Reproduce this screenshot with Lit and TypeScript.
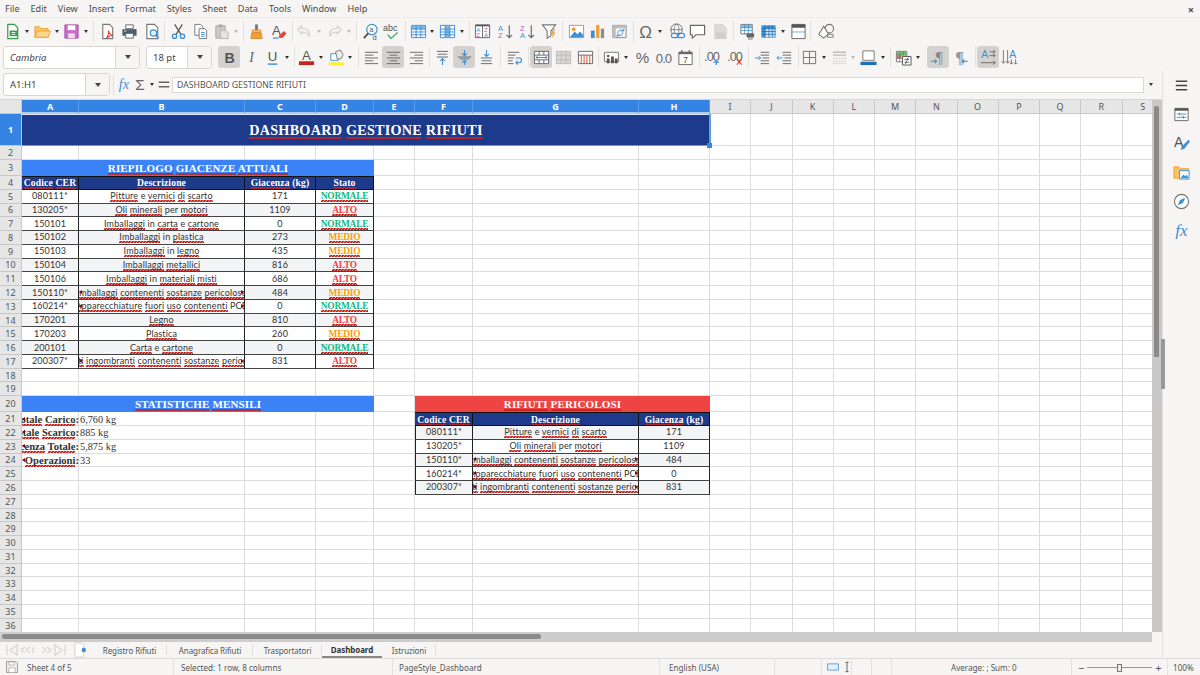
import { LitElement, html, css, svg, nothing } from "lit";
import { customElement } from "lit/decorators.js";

const B = "#3f8fd2";
const O = "#f0a030";

// toolbar icons, all on a 18x18 box
const icons: Record<string, any> = {
  newdoc: svg`<path d="M4 1.500h7l3.500 3.500v11.500h-10.500z" fill="#fff" stroke="#3a9a4a" stroke-width="1.300"/><path d="M6 8h8v6h-8z" fill="#3a9a4a"/><path d="M8 10h4M8 12h4" stroke="#fff"/>`,
  open: svg`<path d="M1 15v-11h5l2 2h7v9z" fill="#f8c468" stroke="${O}"/><path d="M1 15l2.500-6.500h14l-2.500 6.500z" fill="#fbd68e" stroke="${O}"/>`,
  save: svg`<path d="M2 2h14v14h-14z" fill="#c86fc8" stroke="#a94fa9"/><path d="M5 2.500h8v5h-8z" fill="#fff"/><path d="M5.500 11h7v5h-7z" fill="#eedcee"/>`,
  pdf: svg`<path d="M4 1.500h7l3.500 3.500v11.500h-10.500z" fill="#fff" stroke="#777" stroke-width="1.200"/><path d="M8 16c2-3 2.500-6 2-8 1 3 3 5 5 5-3 0-5 1-7 3z" fill="none" stroke="#d9442f" stroke-width="1.200"/>`,
  print: svg`<path d="M5 2h8v4h-8z" fill="#fff" stroke="#666"/><path d="M1.500 6.500h15v7h-15z" fill="#4e5f6e"/><path d="M5 11h8v5h-8z" fill="#fff" stroke="#666"/><path d="M3.500 8.500h2" stroke="#fff"/>`,
  preview: svg`<path d="M3 1.500h8l3.500 3.500v11.500h-11.500z" fill="#fff" stroke="#777" stroke-width="1.200"/><circle cx="10" cy="10.500" r="3.300" fill="#e4f1fb" stroke="${B}" stroke-width="1.300"/><path d="M12.500 13l3 3" stroke="${B}" stroke-width="1.600"/>`,
  cut: svg`<path d="M5 1.500l6.500 10.500M13 1.500l-6.500 10.500" stroke="#555" stroke-width="1.300" fill="none"/><circle cx="4.800" cy="14" r="2.300" fill="none" stroke="${B}" stroke-width="1.400"/><circle cx="13.200" cy="14" r="2.300" fill="none" stroke="${B}" stroke-width="1.400"/>`,
  copy: svg`<path d="M3 1.500h6l2.500 2.500v9h-8.500z" fill="#fff" stroke="#777"/><path d="M7.500 6h6l2 2v8.500h-8z" fill="#fff" stroke="#777"/><path d="M9.500 10h4M9.500 12h4M9.500 14h4" stroke="${B}"/>`,
  paste: svg`<path d="M3 3h10v13h-10z" fill="#c9c9c9" stroke="#aaa"/><path d="M6 1.500h4v3h-4z" fill="#aaa"/><path d="M8 8h6l2 2v6.500h-8z" fill="#e5e5e5" stroke="#b5b5b5"/>`,
  clone: svg`<path d="M7.500 1.500h3v6h-3z" fill="#777"/><path d="M4.500 7.500h9v2.500h-9z" fill="#f6bf82" stroke="#dd8a35"/><path d="M4 10.500h10l1 6h-12z" fill="${O}" stroke="#dd8a35"/>`,
  clear: svg`<text x="1" y="13" font-size="14" font-family="Liberation Sans" fill="#555">A</text><path d="M8 14l5.500-5.500 3 2.500-4.500 5h-3z" fill="#e8443a"/><path d="M2 16h6" stroke="${B}" stroke-width="1.300"/>`,
  undo: svg`<path d="M3 7l4-4v2.500c5 0 8.500 2 8 8.500-1.500-3.500-4-4.500-8-4.500v2z" transform="translate(-1 0)" fill="none" stroke="#cfcfcf" stroke-width="1.200"/>`,
  redo: svg`<path d="M15 7l-4-4v2.500c-5 0-8.500 2-8 8.500 1.500-3.500 4-4.500 8-4.500v2z" transform="translate(1 0)" fill="none" stroke="#cfcfcf" stroke-width="1.200"/>`,
  find: svg`<circle cx="10.500" cy="7" r="5.500" fill="#fff" stroke="${B}" stroke-width="1.300"/><path d="M6.500 11l-4.500 5" stroke="#555" stroke-width="2"/><text x="8" y="9.500" font-size="7.500" font-family="Liberation Sans" fill="#555">a</text><text x="11" y="17.500" font-size="8" font-family="Liberation Sans" fill="#555">d</text>`,
  spell: svg`<text x="0" y="8.500" font-size="9.500" font-family="Liberation Sans" fill="#555">abc</text><path d="M5 12.500l3.500 4 7-6.500" fill="none" stroke="#4caf78" stroke-width="1.500"/>`,
  table: svg`<path d="M1.500 2.500h15v13h-15z" fill="#fff" stroke="${B}"/><path d="M2 3h14v3.500h-14z" fill="#7fb8e6"/><path d="M1.500 6.500h15M1.500 9.500h15M1.500 12.500h15M6.500 2.500v13M11.500 2.500v13" stroke="${B}" fill="none"/>`,
  col: svg`<path d="M1.500 2.500h15v13h-15z" fill="#fff" stroke="${B}"/><path d="M6.500 3h5v12h-5z" fill="#7fb8e6"/><path d="M1.500 6.500h15M1.500 9.500h15M1.500 12.500h15M6.500 2.500v13M11.500 2.500v13" stroke="${B}" fill="none"/>`,
  sort: svg`<path d="M1.500 2.500h15v13h-15zM9 2.500v13" fill="#fff" stroke="#666"/><path d="M1.500 1.500h15v2h-15z" fill="#555"/><text x="2.500" y="9.500" font-size="6.500" font-family="Liberation Sans" fill="${B}">A</text><text x="2.500" y="15" font-size="6.500" font-family="Liberation Sans" fill="#c25fc2">Z</text><text x="10.500" y="9.500" font-size="6.500" font-family="Liberation Sans" fill="#c25fc2">Z</text><text x="10.500" y="15" font-size="6.500" font-family="Liberation Sans" fill="${B}">A</text>`,
  asc: svg`<text x="1" y="8" font-size="8" font-family="Liberation Sans" fill="${B}">A</text><text x="1" y="16" font-size="8" font-family="Liberation Sans" fill="#c25fc2">Z</text><path d="M13 2.500v13M10 12.500l3 3 3-3" fill="none" stroke="#666" stroke-width="1.200"/>`,
  desc: svg`<text x="1" y="8" font-size="8" font-family="Liberation Sans" fill="#c25fc2">Z</text><text x="1" y="16" font-size="8" font-family="Liberation Sans" fill="${B}">A</text><path d="M13 2.500v13M10 12.500l3 3 3-3" fill="none" stroke="#666" stroke-width="1.200"/>`,
  filter: svg`<path d="M1.500 2h14l-5 6.500v5l-4 2.500v-7.500z" fill="#fff" stroke="#777" stroke-width="1.200"/><path d="M13.500 6l-3.500 5.500h2.500l-1.500 5 4.500-6.500h-2.500l2-4z" fill="${O}"/>`,
  image: svg`<path d="M1.500 2.500h15v13h-15z" fill="#fff" stroke="#999"/><circle cx="6" cy="6.500" r="2" fill="${O}"/><path d="M2 15l5-6 3 3 3-3 3 4v2z" fill="${B}"/>`,
  chart: svg`<path d="M2 8h4v8h-4z" fill="${B}"/><path d="M7.500 2h3.500v14h-3.500z" fill="${O}"/><path d="M12.500 6h3.500v10h-3.500z" fill="#8d8d8d"/>`,
  pivot: svg`<path d="M2 2.500h14v13h-14z" fill="#f3f3f3" stroke="#888"/><path d="M2 2.500h14v3h-14zM2 2.500h3v13h-3z" fill="#bdbdbd"/><path d="M7 11a4 4 0 0 1 6-3M13.500 6v2.500h-2.500M12.500 10a3.500 3.500 0 0 1-5 3M6.500 15v-2.500h2.500" fill="none" stroke="${B}"/>`,
  omega: svg`<text x="9" y="15.500" text-anchor="middle" font-size="18" font-family="Liberation Sans" fill="#666">Ω</text>`,
  link: svg`<circle cx="8" cy="7" r="6" fill="#fff" stroke="#666"/><path d="M2 7h12M8 1c-3.500 3-3.500 9 0 12M8 1c3.500 3 3.500 9 0 12" fill="none" stroke="#666" stroke-width=".8"/><rect x="2.500" y="11" width="7.500" height="4.500" rx="2.200" fill="#fff" stroke="${B}" stroke-width="1.200"/><rect x="8.500" y="11" width="8" height="4.500" rx="2.200" fill="none" stroke="${B}" stroke-width="1.200"/>`,
  comment: svg`<path d="M1.500 2.500h15v10h-9l-4 3.500v-3.500h-2z" fill="#fff" stroke="#666" stroke-width="1.200"/>`,
  header: svg`<path d="M3 1.500h8l4 4v11h-12z" fill="#dcdcdc" stroke="#d0d0d0"/><path d="M4 10h10v6h-10z" fill="#cfcfcf"/>`,
  area: svg`<path d="M2 1.500h12v10h-12z" fill="#fff" stroke="#777"/><path d="M2.500 2h11v3h-11z" fill="#7fb8e6"/><path d="M2 5h12M2 8h12M6 2v10M10 2v10" stroke="${B}" stroke-width=".8"/><path d="M8 11h8v4h-8z" fill="#666"/><path d="M10 15h4v2h-4z" fill="#eee" stroke="#666" stroke-width=".8"/>`,
  freeze: svg`<path d="M1.500 2.500h15v13h-15z" fill="#3f8fd2"/><path d="M5.500 6h10v9h-10z" fill="#cfe4f6"/><path d="M1.500 6h15M1.500 9h15M1.500 12h15M5.500 2.500v13M9.500 2.500v13M13 2.500v13" stroke="#1d6fb0" stroke-width=".8"/>`,
  split: svg`<path d="M2 1.500h14v15h-14z" fill="#fff" stroke="#666"/><path d="M2 1.500h14v3.500h-14z" fill="#555"/><path d="M2.500 9.500h13" stroke="${B}" stroke-dasharray="2.500 1"/>`,
  shapes: svg`<circle cx="12" cy="6" r="4.500" fill="none" stroke="#777" stroke-width="1.200"/><path d="M6 3.500l5 8-5 4.500-5-4z" fill="#fff" stroke="#777" stroke-width="1.200"/><path d="M10 12h6v3h-6z" fill="#fff" stroke="#777"/>`,
  italic: svg`<text x="9" y="14" text-anchor="middle" font-size="15" font-style="italic" font-family="Liberation Serif" fill="#666">I</text>`,
  bold: svg`<text x="9" y="14.500" text-anchor="middle" font-size="15" font-weight="700" font-family="Liberation Sans" fill="#555">B</text>`,
  under: svg`<text x="9" y="13" text-anchor="middle" font-size="14" font-family="Liberation Sans" fill="#555">U</text><path d="M4 16h10" stroke="${B}" stroke-width="1.500"/>`,
  fcolor: svg`<text x="9" y="12" text-anchor="middle" font-size="14" font-family="Liberation Sans" fill="#555">A</text><path d="M1 13h16v4h-16z" fill="#c9211e"/>`,
  hl: svg`<path d="M1 14h16v3.500h-16z" fill="#ffee33"/><path d="M3 5h8v7h-8z" fill="#fff" stroke="${B}"/><path d="M8 3l5-2 3 5-2 4-4 1z" fill="#eee" stroke="#777"/>`,
  left: svg`<path d="M2 3.500h14M2 6.500h9M2 9.500h14M2 12.500h9M2 15.500h14" stroke="#666"/>`,
  center: svg`<path d="M2 3.500h14M5 6.500h8M2 9.500h14M5 12.500h8M2 15.500h14" stroke="#666"/>`,
  right: svg`<path d="M2 3.500h14M7 6.500h9M2 9.500h14M7 12.500h9M2 15.500h14" stroke="#666"/>`,
  vtop: svg`<path d="M3 2.500h12M4 5.500h10M3 8.500h12" stroke="#666"/><path d="M9 17v-7M6.500 12.500l2.500-2.500 2.500 2.500" fill="none" stroke="${B}" stroke-width="1.200"/>`,
  vmid: svg`<path d="M2 8.500h14M4 10.500h10" stroke="#666"/><path d="M9 1v6M6.500 4.500l2.500 2.500 2.500-2.500M9 17v-5M6.500 14.500l2.500-2.500 2.500 2.500" fill="none" stroke="${B}" stroke-width="1.200"/>`,
  vbot: svg`<path d="M3 9.500h12M4 12.500h10M3 15.500h12" stroke="#666"/><path d="M9 1v7M6.500 5.500l2.500 2.500 2.500-2.500" fill="none" stroke="${B}" stroke-width="1.200"/>`,
  wrap: svg`<path d="M2 3.500h12M2 6.500h8M2 9.500h6M2 12.500h5M2 15.500h6" stroke="#666"/><path d="M10 9.500h4a2.500 2.500 0 0 1 0 5h-3M12.500 12.500l-2 2 2 2" fill="none" stroke="${B}" stroke-width="1.200"/>`,
  merge: svg`<path d="M1.500 2.500h15v13h-15z" fill="#fff" stroke="#666"/><path d="M1.500 6.500h15M1.500 11.500h15M6.500 2.500v4M11.500 2.500v4M6.500 11.500v4M11.500 11.500v4" stroke="#666"/><path d="M3 9h12M5 7.500l-2 1.500 2 1.500M13 7.500l2 1.500-2 1.500" fill="none" stroke="${B}"/>`,
  mergeoff: svg`<path d="M1.500 2.500h15v13h-15z" fill="#d8d8d8" stroke="#bbb"/><path d="M1.500 6.500h15M1.500 11.500h15M6.500 2.500v13M11.500 2.500v13" stroke="#bbb"/>`,
  mergered: svg`<path d="M1.500 2.500h15v13h-15z" fill="#fff" stroke="#666"/><path d="M1.500 6.500h15" stroke="#666"/><path d="M4.500 6.500v9M7.500 6.500v9M10.500 6.500v9M13.500 6.500v9" stroke="#d9442f"/>`,
  numfmt: svg`<path d="M1.500 3.500h15v10h-15z" fill="#fff" stroke="#777"/><path d="M4 10h3v5h-3zM8.500 8h3v7h-3zM12.500 10h3v5h-3z" fill="#555"/><circle cx="5.500" cy="7.500" r="1.300" fill="#555"/>`,
  pct: svg`<text x="9" y="15" text-anchor="middle" font-size="16" font-family="Liberation Sans" fill="#666">%</text>`,
  zero: svg`<text x="9" y="14.500" text-anchor="middle" font-size="14" letter-spacing="-1" font-family="Liberation Sans" fill="#666">0.0</text>`,
  date: svg`<path d="M2 3.500h14v13h-14z" fill="#fff" stroke="#666"/><path d="M2 3h14v2.500h-14z" fill="#666"/><path d="M5 1v3M13 1v3" stroke="#666" stroke-width="1.300"/><text x="9" y="15" text-anchor="middle" font-size="9.500" font-family="Liberation Sans" fill="#555">7</text>`,
  addd: svg`<text x="8" y="13" text-anchor="middle" font-size="13.500" letter-spacing="-1" font-family="Liberation Sans" fill="#666">.00</text><path d="M13 11v6M10 14h6" stroke="${B}" stroke-width="1.300"/>`,
  deld: svg`<text x="8" y="13" text-anchor="middle" font-size="13.500" letter-spacing="-1" font-family="Liberation Sans" fill="#666">.00</text><path d="M10.500 11l5 5.500M15.500 11l-5 5.500" stroke="#d9442f" stroke-width="1.300"/>`,
  indent: svg`<path d="M7 3.500h9M7 6.500h9M9 9.500h7M7 12.500h9M7 15.500h9" stroke="#666"/><path d="M1 9.500h6M5 7.500l2 2-2 2" fill="none" stroke="${B}"/>`,
  outdent: svg`<path d="M7 3.500h9M7 6.500h9M9 9.500h7M7 12.500h9M7 15.500h9" stroke="#666"/><path d="M7 9.500h-6M3 7.500l-2 2 2 2" fill="none" stroke="${B}"/>`,
  border: svg`<path d="M2.500 2.500h13v13h-13zM9 2.500v13M2.500 9h13" fill="none" stroke="#8a6a4a"/>`,
  bstyle: svg`<path d="M2 3.500h14M2 6.500h14" stroke="#bbb" stroke-width="1.500"/><path d="M2 10h14M2 13h14M2 15.500h14" stroke="#ccc" stroke-dasharray="2 1"/>`,
  bcolor: svg`<path d="M3 2h12v10h-12z" fill="#fff" stroke="#777"/><path d="M0.500 13.500h17v3.500h-17z" fill="#1f6fb5"/>`,
  cond: svg`<path d="M1.500 2.500h11v11h-11z" fill="#fff" stroke="#777"/><path d="M2 3h10v3.500h-10z" fill="#6cbf6c"/><path d="M2 6.500h5v3.500h-5z" fill="#e8685a"/><path d="M1.500 6.500h11M1.500 10h11M5 2.500v11M9 2.500v11" stroke="#777" stroke-width=".7"/><path d="M8 8h9v9h-9z" fill="#fff" stroke="#555"/><path d="M10 11h5M10 14h5M11 16l3-7" stroke="#555" stroke-width=".9"/>`,
  ltr: svg`<text x="10" y="15" text-anchor="middle" font-size="17" font-family="Liberation Serif" fill="#888">¶</text><path d="M1 13h6M5 11l2 2-2 2" fill="none" stroke="${B}" stroke-width="1.200"/>`,
  rtl: svg`<text x="8" y="15" text-anchor="middle" font-size="17" font-family="Liberation Serif" font-weight="700" fill="#999">¶</text><path d="M17 13h-6M13 11l-2 2 2 2" fill="none" stroke="${B}" stroke-width="1.200"/>`,
  tleft: svg`<text x="5" y="10" text-anchor="middle" font-size="11" font-family="Liberation Sans" fill="${B}">A</text><path d="M10 3h6M14 1l2 2-2 2M10 7h6M14 5l2 2-2 2" fill="none" stroke="#666" stroke-width=".9"/><path d="M1 14.500h15M14 12.500l2 2-2 2" fill="none" stroke="#666"/>`,
  ttop: svg`<text x="12.500" y="10" text-anchor="middle" font-size="11" font-family="Liberation Sans" fill="${B}">A</text><path d="M2.500 1v14M.500 13l2 2 2-2M7 1v14M5 13l2 2 2-2M11 11v5M9.500 14.500l1.500 1.500 1.500-1.500M15.500 11v5M14 14.500l1.500 1.500 1.500-1.500" fill="none" stroke="#666" stroke-width=".9"/>`,
  fx: svg`<text x="9" y="14" text-anchor="middle" font-size="16" font-style="italic" font-family="Liberation Serif" fill="${B}">fx</text>`,
  sigma: svg`<text x="9" y="15" text-anchor="middle" font-size="17" font-family="Liberation Sans" fill="#666">Σ</text>`,
  eq: svg`<path d="M3 6.500h12M3 11.500h12" stroke="#666" stroke-width="1.700"/>`,
  menu: svg`<path d="M3 4.500h12M3 9h12M3 13.500h12" stroke="#444" stroke-width="1.500"/>`,
  props: svg`<path d="M2 2.500h14v13h-14z" fill="#fff" stroke="#666"/><path d="M2 2.500h14v2.500h-14z" fill="#555"/><path d="M4 8.500h10M4 12h10" stroke="${B}"/><path d="M7 7v3M11 10.500v3" stroke="${B}"/>`,
  styles: svg`<text x="6" y="13" text-anchor="middle" font-size="15" font-family="Liberation Sans" fill="#555">A</text><path d="M16.500 5l-7 7-1.500 4 4-1.500 6-7.500z" fill="${B}"/>`,
  gallery: svg`<path d="M1 15v-12h5l1.500 2h9v10z" fill="#f8c468" stroke="${O}"/><path d="M7 7h10v9h-10z" fill="#fff" stroke="${B}"/><path d="M8 15l3-4 2 2 1.500-1.500 2 3.500z" fill="${B}"/>`,
  nav: svg`<circle cx="9" cy="9" r="7.500" fill="#fff" stroke="#777" stroke-width="1.200"/><path d="M13 5l-2.500 5.500-5.500 2.500 2.500-5.500z" fill="${B}"/>`,
  sfx: svg`<text x="9" y="15" text-anchor="middle" font-size="18" font-style="italic" font-family="Liberation Serif" fill="${B}">fx</text>`,
  disk: svg`<path d="M2 2h12l2 2v12h-14z" fill="#f0f0f0" stroke="#888"/><path d="M5 2.500h7v4h-7zM5 10h8v6h-8z" fill="#fff" stroke="#aaa"/>`,
};

type Tool = [string, number, number?];
const row1: Tool[] = [
  ["newdoc", 12], ["dd", 27], ["open", 42], ["dd", 57], ["save", 71], ["dd", 86], ["sep", 93],
  ["pdf", 107], ["print", 129], ["preview", 152], ["sep", 164], ["cut", 178], ["copy", 200], ["paste", 221], ["ddoff", 236], ["sep", 243],
  ["clone", 256], ["clear", 279], ["sep", 292], ["undo", 304], ["ddoff", 319], ["redo", 334], ["ddoff", 349], ["sep", 356],
  ["find", 370], ["spell", 391], ["sep", 405], ["table", 418], ["dd", 432], ["col", 447], ["dd", 462], ["sep", 469],
  ["sort", 482], ["asc", 505], ["desc", 527], ["filter", 549], ["sep", 562], ["image", 576], ["chart", 597], ["pivot", 619], ["sep", 633],
  ["omega", 645], ["dd", 660], ["link", 677], ["comment", 697], ["header", 720], ["sep", 733], ["area", 747], ["freeze", 768], ["dd", 783], ["split", 798], ["sep", 810], ["shapes", 826],
];
// third value 1 = pressed button
const row2a: Tool[] = [
  ["bold", 229, 1], ["italic", 251], ["under", 272], ["dd", 287], ["sep", 294], ["fcolor", 306], ["dd", 321], ["hl", 336], ["dd", 350], ["sep", 358],
  ["left", 371], ["center", 393, 1], ["right", 416], ["sep", 429], ["vtop", 442], ["vmid", 464, 1], ["vbot", 486], ["sep", 500], ["wrap", 514], ["sep", 528],
  ["merge", 541, 1], ["mergeoff", 563], ["mergered", 585], ["sep", 598], ["numfmt", 611], ["dd", 626], ["pct", 642], ["zero", 663], ["date", 685], ["sep", 699],
  ["addd", 712], ["deld", 735], ["sep", 748], ["indent", 762], ["outdent", 784], ["sep", 798], ["border", 809], ["dd", 824], ["bstyle", 839], ["ddoff", 853], ["bcolor", 868], ["dd", 883], ["sep", 890],
  ["cond", 903], ["dd", 918], ["ltr", 938, 1], ["rtl", 960], ["sep", 975], ["tleft", 988, 1], ["ttop", 1009],
];

const widthOf = (t: string) => (t === "sep" ? 1 : t === "dd" || t === "ddoff" ? 8 : 22);

const colW = [57, 166, 71, 58, 41, 58, 166, 71, 41.25, 41.25, 41.25, 41.25, 41.25, 41.25, 41.25, 41.25, 41.25, 41.25, 41.25];
const colNames = "ABCDEFGHIJKLMNOPQRS".split("");
const rowH = (r: number) => (r === 1 ? 32 : r === 2 ? 14 : r === 3 || r === 20 ? 16 : 13.77);

type Cell = { c: number; r: number; span?: number; text: string; cls: string; clip?: boolean };

// words between * get the spell check squiggle
const stock = [
  ["080111*", "*Pitture* e *vernici* *di* *scarto*", "171", "N"],
  ["130205*", "*Oli* *minerali* per *motori*", "1109", "A"],
  ["150101", "*Imballaggi* in *carta* e *cartone*", "0", "N"],
  ["150102", "*Imballaggi* in *plastica*", "273", "M"],
  ["150103", "*Imballaggi* in *legno*", "435", "M"],
  ["150104", "*Imballaggi* *metallici*", "816", "A"],
  ["150106", "*Imballaggi* in *materiali* *misti*", "686", "A"],
  ["150110*", "#*Imballaggi* *contenenti* *sostanze* *pericolose*", "484", "M"],
  ["160214*", "#*Apparecchiature* *fuori* *uso* *contenenti* PCB", "0", "N"],
  ["170201", "*Legno*", "810", "A"],
  ["170203", "*Plastica*", "260", "M"],
  ["200101", "*Carta* e *cartone*", "0", "N"],
  ["200307*", "#*Rifiuti* *ingombranti* *contenenti* *sostanze* *pericolose*", "831", "A"],
];
const stato: Record<string, [string, string]> = { N: ["NORMALE", "st-n"], M: ["MEDIO", "st-m"], A: ["ALTO", "st-a"] };
const danger = [0, 1, 7, 8, 12].map((i) => stock[i]);
const stats = [
  ["*Totale* *Carico*:", "6,760 kg"],
  ["*Totale* *Scarico*:", "885 kg"],
  ["*Giacenza* *Totale*:", "5,875 kg"],
  ["N. *Operazioni*:", "33"],
];
const tabs: [string, number][] = [["Registro Rifiuti", 75], ["Anagrafica Rifiuti", 86], ["Trasportatori", 69], ["Dashboard", 60], ["Istruzioni", 54]];

function buildCells(): Cell[] {
  const out: Cell[] = [];
  out.push({ c: 0, r: 1, span: 8, text: "*DASHBOARD* *GESTIONE* *RIFIUTI*", cls: "title" });
  out.push({ c: 0, r: 3, span: 4, text: "*RIEPILOGO* *GIACENZE* *ATTUALI*", cls: "sect" });
  ["*Codice* *CER*", "*Descrizione*", "*Giacenza* (kg)", "*Stato*"].forEach((t, i) => out.push({ c: i, r: 4, text: t, cls: "head" }));
  stock.forEach((s, i) => {
    const z = i % 2 ? "zebra" : "";
    out.push({ c: 0, r: 5 + i, text: s[0], cls: `data ${z}` });
    out.push({ c: 1, r: 5 + i, text: s[1].replace("#", ""), cls: `data ${z}`, clip: s[1][0] === "#" });
    out.push({ c: 2, r: 5 + i, text: s[2], cls: `data ${z}` });
    out.push({ c: 3, r: 5 + i, text: `*${stato[s[3]][0]}*`, cls: `data stato ${stato[s[3]][1]} ${z}` });
  });
  out.push({ c: 0, r: 20, span: 4, text: "*STATISTICHE* *MENSILI*", cls: "sect" });
  stats.forEach((s, i) => {
    out.push({ c: 0, r: 21 + i, text: s[0], cls: "lbl", clip: true });
    out.push({ c: 1, r: 21 + i, text: s[1], cls: "val" });
  });
  out.push({ c: 5, r: 20, span: 3, text: "*RIFIUTI* *PERICOLOSI*", cls: "sect red" });
  ["*Codice* *CER*", "*Descrizione*", "*Giacenza* (kg)"].forEach((t, i) => out.push({ c: 5 + i, r: 21, text: t, cls: "head" }));
  danger.forEach((s, i) => {
    const z = i % 2 ? "" : "zebra";
    out.push({ c: 5, r: 22 + i, text: s[0], cls: `data first ${z}` });
    out.push({ c: 6, r: 22 + i, text: s[1].replace("#", ""), cls: `data ${z}`, clip: s[1][0] === "#" });
    out.push({ c: 7, r: 22 + i, text: s[2], cls: `data ${z}` });
  });
  return out;
}

@customElement("app-root")
export class AppRoot extends LitElement {
  static styles = css`
    :host {
      display: block;
      width: 1200px;
      height: 675px;
      overflow: hidden;
      background: #f6f5f4;
      font-family: "Noto Sans", sans-serif;
      font-size: 10px;
      color: #444;
    }
    .menubar {
      height: 18px;
      display: flex;
      align-items: center;
      gap: 11px;
      padding: 0 5px;
      font-size: 9.100px;
      color: #4a4a4a;
      border-bottom: 1px solid #ecebe9;
      box-sizing: border-box;
      position: relative;
    }
    .close {
      position: absolute;
      right: 6px;
      top: 2px;
      font-size: 11px;
      font-weight: 700;
    }
    .tb {
      height: 26px;
      display: flex;
      align-items: center;
    }
    .btn {
      width: 22px;
      height: 22px;
      flex: none;
      display: flex;
      align-items: center;
      justify-content: center;
      border-radius: 3px;
    }
    .btn svg {
      width: 17px;
      height: 17px;
    }
    .btn.on {
      background: #d4d2cf;
    }
    .dd {
      width: 8px;
      height: 22px;
      flex: none;
      display: flex;
      align-items: center;
      justify-content: center;
    }
    .dd::after {
      content: "";
      border-left: 2.500px solid transparent;
      border-right: 2.500px solid transparent;
      border-top: 3px solid #333;
    }
    .dd.off::after {
      border-top-color: #bbb;
    }
    .sep {
      width: 1px;
      height: 20px;
      flex: none;
      background: #e2e0dd;
    }
    .combo {
      flex: none;
      height: 23px;
      display: flex;
      align-items: stretch;
      background: #fff;
      border: 1px solid #d8d6d3;
      border-radius: 3px;
      box-sizing: border-box;
      font-size: 9.500px;
    }
    .combo .v {
      flex: 1;
      padding-left: 6px;
      display: flex;
      align-items: center;
    }
    .combo .b {
      width: 23px;
      background: #f6f5f4;
      border-left: 1px solid #d8d6d3;
      display: flex;
      align-items: center;
      justify-content: center;
    }
    .b::after {
      content: "";
      border-left: 3.500px solid transparent;
      border-right: 3.500px solid transparent;
      border-top: 4px solid #444;
    }
    .font {
      width: 137px;
      margin-left: 3px;
      font-style: italic;
    }
    .size {
      width: 66px;
      margin-left: 6px;
    }
    .fbar {
      height: 30px;
      display: flex;
      align-items: center;
      border-bottom: 1px solid #d9d7d4;
      box-sizing: border-box;
      width: 1161px;
    }
    .name {
      width: 107px;
      margin-left: 3px;
    }
    .fbar .sep {
      margin-left: 3px;
    }
    .fx {
      margin-left: 2px;
    }
    .fbar .btn {
      width: 16px;
    }
    .input {
      width: 972px;
      height: 16px;
      background: #fff;
      border: 1px solid #dcdad7;
      box-sizing: border-box;
      padding-left: 4px;
      line-height: 14px;
      font-size: 8.700px;
      color: #555;
    }
    .fbar .end {
      margin-left: 3px;
    }
    .main {
      height: 542px;
      display: flex;
      align-items: flex-start;
    }
    .left {
      width: 1162px;
    }
    .sheet {
      height: 532px;
      display: flex;
      overflow: hidden;
      background: #fff;
    }
    .grid {
      width: 1152px;
      flex: none;
      display: grid;
      position: relative;
      overflow: hidden;
      font-family: "Lato", sans-serif;
      font-size: 9px;
    }
    .corner {
      background: #e6e6e6;
      border-right: 1px solid #c8c8c8;
      border-bottom: 1px solid #c8c8c8;
    }
    .ch, .rh {
      background: #e6e6e6;
      color: #555;
      display: flex;
      align-items: center;
      justify-content: center;
      box-sizing: border-box;
      border-right: 1px solid #c8c8c8;
      border-bottom: 1px solid #c8c8c8;
      font-size: 9px;
      font-family: "Noto Sans", sans-serif;
    }
    .ch.sel {
      background: #3584e4;
      color: #fff;
      font-weight: 700;
      border-right-color: #5b9bea;
      border-bottom: 2px solid #a9cdf5;
    }
    .rh.sel {
      background: #3584e4;
      color: #fff;
      font-weight: 700;
    }
    .bg {
      box-sizing: border-box;
      border-right: 1px solid #dcdcdc;
      border-bottom: 1px solid #dcdcdc;
    }
    .cell {
      box-sizing: border-box;
      display: flex;
      align-items: center;
      justify-content: center;
      white-space: nowrap;
      overflow: hidden;
      position: relative;
      min-width: 0;
    }
    .cell span.t {
      flex: none;
    }
    /* spell check squiggle, two diagonal gradients make the zigzag */
    .sp {
      padding-bottom: 1px;
      background:
        linear-gradient(135deg, transparent 35%, #c9211e 35%, #c9211e 65%, transparent 65%) 0 100% / 3px 2px repeat-x,
        linear-gradient(45deg, transparent 35%, #c9211e 35%, #c9211e 65%, transparent 65%) 1.500px 100% / 3px 2px repeat-x;
    }
    .title {
      background: #1e3a8a;
      color: #fff;
      font: 700 14.200px "Liberation Serif", serif;
      letter-spacing: 0.250px;
      border-top: 1px solid #dfe6f4;
      border-bottom: 1px solid #dfe6f4;
    }
    .sect {
      background: #3b82f6;
      color: #fff;
      font: 700 11px "Liberation Serif", serif;
      letter-spacing: 0.150px;
    }
    .sect.red {
      background: #ef4444;
    }
    .head {
      background: #1e3a8a;
      color: #fff;
      font: 700 9.600px "Liberation Serif", serif;
      letter-spacing: 0.150px;
      border-right: 1px solid #111;
      border-bottom: 1px solid #111;
      border-top: 1px solid #111;
    }
    .data {
      color: #333;
      border-right: 1px solid #222;
      border-bottom: 1px solid #444;
      letter-spacing: 0.150px;
      padding-bottom: 1px;
    }
    .first {
      border-left: 1px solid #222;
    }
    .zebra {
      background: #f3f4f6;
    }
    .cell.stato {
      font: 700 9.400px "Liberation Serif", serif;
      letter-spacing: -0.200px;
      padding-bottom: 0;
    }
    .st-n {
      color: #10b981;
    }
    .st-m {
      color: #f59e0b;
    }
    .st-a {
      color: #ef4444;
    }
    .lbl {
      font: 700 10.600px "Liberation Serif", serif;
      color: #333;
      justify-content: flex-end;
    }
    .val {
      font: 400 10.300px "Liberation Serif", serif;
      color: #333;
      justify-content: flex-start;
      padding-left: 1px;
    }
    .clip-l, .clip-r {
      position: absolute;
      top: 50%;
      margin-top: -2.500px;
      border-top: 2.500px solid transparent;
      border-bottom: 2.500px solid transparent;
    }
    .clip-l {
      left: 0;
      border-right: 3px solid #8b0000;
    }
    .clip-r {
      right: 0;
      border-left: 3px solid #8b0000;
    }
    .selection {
      position: absolute;
      left: 22px;
      top: 14px;
      width: 689px;
      height: 32px;
      box-sizing: border-box;
      border: solid #5c9ded;
      border-width: 0 2px 1px 0;
      pointer-events: none;
    }
    .selection::after {
      content: "";
      position: absolute;
      right: -3px;
      bottom: -3px;
      width: 5px;
      height: 5px;
      background: #3584e4;
    }
    .vs {
      width: 10px;
      flex: none;
      background: #c8c8c8;
      padding: 6px 0 0 2px;
      box-sizing: border-box;
    }
    .vs i {
      display: block;
      width: 5px;
      height: 251px;
      background: #8a8a8a;
      border-radius: 2px 2px 0 0;
    }
    .handle {
      position: absolute;
      left: 1161px;
      top: 339px;
      width: 4px;
      height: 50px;
      background: #999;
    }
    .hs {
      height: 10px;
      width: 1152px;
      background: #cdcdcd;
      padding-top: 2px;
      box-sizing: border-box;
    }
    .hs i {
      display: block;
      width: 539px;
      height: 5px;
      margin-left: 2px;
      background: #8a8a8a;
      border-radius: 3px;
    }
    .tabs {
      height: 16px;
      display: flex;
      align-items: center;
      font-size: 8px;
      letter-spacing: -0.100px;
      color: #555;
    }
    .nav {
      width: 60px;
      height: 12px;
      margin-left: 6px;
      flex: none;
    }
    .tadd {
      width: 16px;
      height: 16px;
      margin: 0 2px 0 8px;
      flex: none;
    }
    .tab {
      height: 16px;
      flex: none;
      display: flex;
      align-items: center;
      justify-content: center;
      box-sizing: border-box;
      position: relative;
    }
    .tab::after {
      content: "";
      position: absolute;
      right: 0;
      top: 3px;
      height: 10px;
      width: 1px;
      background: #dfddda;
    }
    .tab.cur {
      font-weight: 700;
      color: #333;
      border-bottom: 2px solid #888;
      padding-top: 1px;
    }
    .tab.cur::after {
      display: none;
    }
    .status {
      height: 17px;
      display: flex;
      align-items: center;
      font-size: 8.100px;
      color: #555;
      border-top: 1px solid #dedcd9;
      box-sizing: border-box;
    }
    .status > div {
      height: 100%;
      display: flex;
      align-items: center;
      box-sizing: border-box;
      border-right: 1px solid #e4e2df;
      flex: none;
    }
    .status svg {
      width: 14px;
      height: 14px;
      flex: none;
    }
    .s1 { width: 174px; padding-left: 5px; gap: 8px; }
    .s2 { width: 219px; padding-left: 7px; }
    .s3 { width: 267px; padding-left: 6px; }
    .s4 { width: 115px; padding-left: 9px; }
    .s5 { width: 47px; }
    .s6 { width: 30px; padding-left: 4px; }
    .s7 { width: 20px; }
    .s8 { width: 20px; }
    .s9 { width: 180px; padding-left: 59px; }
    .s10 { width: 96px; padding-left: 6px; font-size: 11px; }
    .s11 { padding-left: 5px; border: none !important; }
    .slider {
      width: 65px;
      height: 1px;
      background: #999;
      margin: 0 3px 0 3px;
      position: relative;
    }
    .slider::after {
      content: "";
      position: absolute;
      left: 30px;
      top: -3px;
      width: 3px;
      height: 6px;
      border: 1px solid #777;
      background: #eee;
    }
    .side {
      width: 38px;
      height: 588px;
      margin-top: -29px;
      border-left: 1px solid #e2e0dd;
      box-sizing: border-box;
      display: flex;
      flex-direction: column;
      align-items: center;
      flex: none;
    }
    .side .btn {
      height: 29px;
    }
  `;

  private word(text: string) {
    return text.split(/(\*[^*]+\*)/).map((p) =>
      p[0] === "*" ? html`<span class="sp">${p.slice(1, -1)}</span>` : p
    );
  }

  private icon(name: string) {
    return html`<svg viewBox="0 0 18 18">${icons[name]}</svg>`;
  }

  // each tool sits in flow, its left margin comes from the centre x in the data
  private tools(list: Tool[], start: number) {
    let end = start;
    return list.map(([t, cx, on]) => {
      const w = widthOf(t);
      const ml = cx - w / 2 - end;
      end = cx + w / 2;
      const st = `margin-left:${ml}px`;
      if (t === "sep") return html`<div class="sep" style=${st}></div>`;
      if (t === "dd") return html`<div class="dd" style=${st}></div>`;
      if (t === "ddoff") return html`<div class="dd off" style=${st}></div>`;
      return html`<div class="btn ${on ? "on" : ""}" style=${st}>${this.icon(t)}</div>`;
    });
  }

  private sheet() {
    const cols = colW.map((w) => `${w}px`).join(" ");
    const rows: number[] = [];
    for (let r = 1; r <= 38; r++) rows.push(rowH(r));
    const tpl = `grid-template-columns:22px ${cols};grid-template-rows:14px ${rows.map((h) => `${h}px`).join(" ")}`;
    const cells = buildCells();
    const pos = (c: number, r: number, span = 1) =>
      `grid-column:${c + 2} / span ${span};grid-row:${r + 1}`;
    const bg = [];
    for (let r = 1; r <= 38; r++) for (let c = 0; c < colW.length; c++) bg.push(html`<div class="bg" style=${pos(c, r)}></div>`);
    return html`<div class="grid" style=${tpl}>
      <div class="corner" style="grid-column:1;grid-row:1"></div>
      ${colNames.map(
        (n, i) => html`<div class="ch ${i < 8 ? "sel" : ""}" style="grid-column:${i + 2};grid-row:1">${n}</div>`
      )}
      ${rows.map(
        (_, i) => html`<div class="rh ${i === 0 ? "sel" : ""}" style="grid-column:1;grid-row:${i + 2}">${i + 1}</div>`
      )}
      ${bg}
      ${cells.map(
        (x) => html`<div class="cell ${x.cls}" style=${pos(x.c, x.r, x.span)}>
          <span class="t">${this.word(x.text)}</span>
          ${x.clip ? html`<i class="clip-l"></i>${x.cls === "lbl" ? nothing : html`<i class="clip-r"></i>`}` : nothing}
        </div>`
      )}
      <div class="selection"></div>
    </div>`;
  }

  render() {
    return html`
      <div class="menubar">
        ${["File", "Edit", "View", "Insert", "Format", "Styles", "Sheet", "Data", "Tools", "Window", "Help"].map((m) => html`<span>${m}</span>`)}
        <span class="close">×</span>
      </div>
      <div class="tb">${this.tools(row1, 0)}</div>
      <div class="tb">
        <div class="combo font"><div class="v">Cambria</div><div class="b"></div></div>
        <div class="combo size"><div class="v">18 pt</div><div class="b"></div></div>
        ${this.tools(row2a, 212)}
      </div>
      <div class="fbar">
        <div class="combo name"><div class="v">A1:H1</div><div class="b"></div></div>
        <div class="sep"></div>
        <div class="btn fx">${this.icon("fx")}</div>
        <div class="btn">${this.icon("sigma")}</div>
        <div class="dd"></div>
        <div class="btn">${this.icon("eq")}</div>
        <div class="input">DASHBOARD GESTIONE RIFIUTI</div>
        <div class="dd end"></div>
      </div>
      <div class="main">
        <div class="left">
          <div class="sheet">${this.sheet()}<div class="vs"><i></i></div></div>
          <div class="hs"><i></i></div>
        </div>
        <div class="handle"></div>
        <div class="side">
          <div class="btn">${this.icon("menu")}</div>
          <div class="btn">${this.icon("props")}</div>
          <div class="btn">${this.icon("styles")}</div>
          <div class="btn">${this.icon("gallery")}</div>
          <div class="btn">${this.icon("nav")}</div>
          <div class="btn">${this.icon("sfx")}</div>
        </div>
      </div>
      <div class="tabs">
        <svg class="nav" viewBox="0 0 60 12"><path d="M1 1v10M11 1l-7 5 7 5zM19 3l-4 3 4 3M24 3l-4 3 4 3M27 3l-0 6M36 3l4 3-4 3M41 3l4 3-4 3M49 1l7 5-7 5zM59 1v10" fill="none" stroke="#d8d6d3" stroke-width="1.200"/></svg>
        <svg class="tadd" viewBox="0 0 18 18"><path d="M1 1h7l3 3v13h-10z" fill="#fff" stroke="#ccc"/><circle cx="11" cy="9" r="2.500" fill="${B}"/></svg>
        ${tabs.map(
          ([t, w]) => html`<div class="tab ${t === "Dashboard" ? "cur" : ""}" style="width:${w}px">${t}</div>`
        )}
      </div>
      <div class="status">
        <div class="s1">${this.icon("disk")}<span>Sheet 4 of 5</span></div>
        <div class="s2">Selected: 1 row, 8 columns</div>
        <div class="s3">PageStyle_Dashboard</div>
        <div class="s4">English (USA)</div>
        <div class="s5"></div>
        <div class="s6"><svg viewBox="0 0 18 18"><path d="M2 5h14v8h-14z" fill="#e4f1fb" stroke="${B}"/></svg><svg viewBox="0 0 18 18"><path d="M7 3h4M7 15h4M9 3v12" stroke="#444"/></svg></div>
        <div class="s7"></div>
        <div class="s8"></div>
        <div class="s9">Average: ; Sum: 0</div>
        <div class="s10"><span>−</span><i class="slider"></i><span>+</span></div>
        <div class="s11">100%</div>
      </div>
    `;
  }
}
